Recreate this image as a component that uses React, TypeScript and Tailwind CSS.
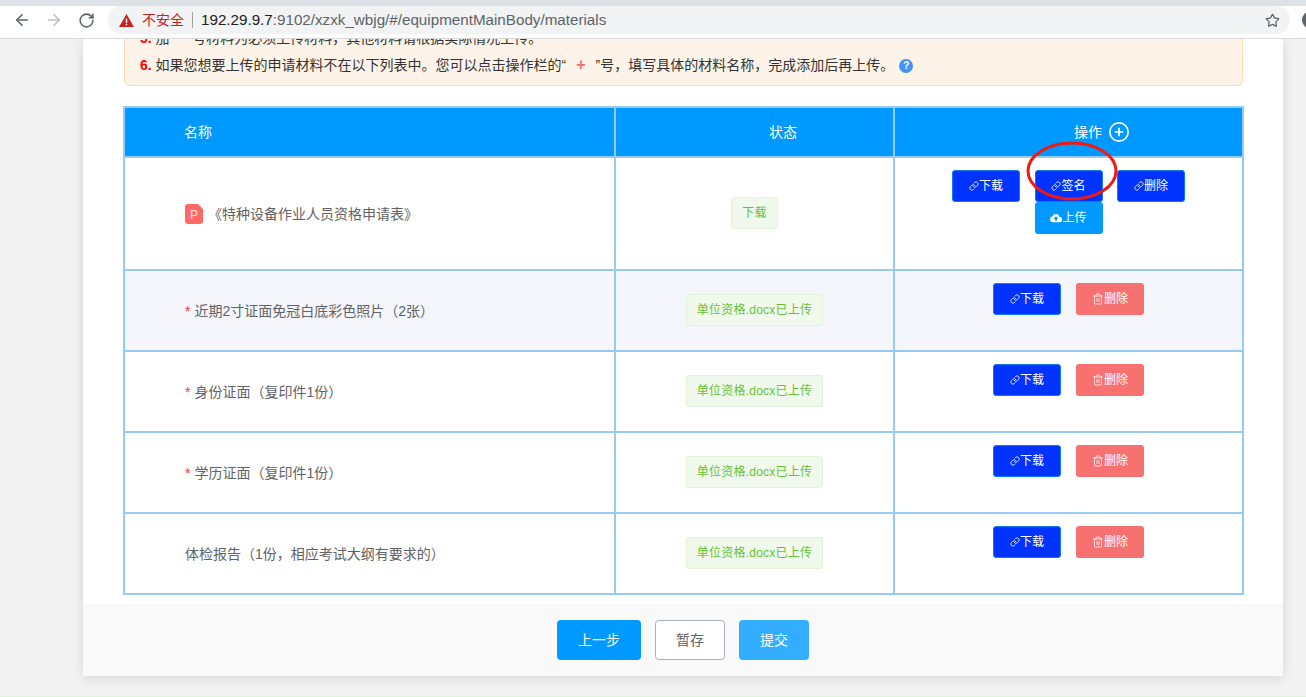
import { ArrowLeft, ArrowRight, CirclePlus, Link, RotateCw, Star, Trash2 } from "lucide-react";

const FONT = "font-['Liberation_Sans','Noto_Sans_CJK_SC',sans-serif]";

const ROWS = [
  { required: true, name: "近期2寸证面免冠白底彩色照片（2张）", bg: "bg-[#f4f6fb]" },
  { required: true, name: "身份证面（复印件1份）", bg: "bg-white" },
  { required: true, name: "学历证面（复印件1份）", bg: "bg-white" },
  { required: false, name: "体检报告（1份，相应考试大纲有要求的）", bg: "bg-white" },
];

function CloudIcon() {
  return (
    <svg viewBox="0 0 24 24" className="w-3 h-3" fill="currentColor">
      <path d="M19.4 10.1A7.5 7.5 0 0 0 5 8.6 6 6 0 0 0 6 20.5h13a5 5 0 0 0 .4-10.4zM14 13.5V17h-4v-3.5H7l5-5 5 5h-3z" />
    </svg>
  );
}

function BlueButton({ label }: { label: string }) {
  return (
    <button className="w-[68px] h-8 rounded-[3px] bg-[#0033ff] border border-[#0a7bf0] text-white text-xs flex items-center justify-center">
      <Link className="w-[10px] h-[10px]" strokeWidth={2} />
      {label}
    </button>
  );
}

function DeleteButton() {
  return (
    <button className="w-[68px] h-8 rounded-[3px] bg-[#f77171] text-white text-xs flex items-center justify-center">
      <Trash2 className="w-3 h-3" strokeWidth={1.5} />
      删除
    </button>
  );
}

function Tag({ label }: { label: string }) {
  return (
    <div className="flex justify-center pb-[1px]">
      <span className="inline-flex items-center h-8 px-[10px] rounded-[3px] bg-[#f0f9eb] border border-[#e1f3d8] text-[#67c23a] text-xs tracking-[0.25px]">
        {label}
      </span>
    </div>
  );
}

function PptIcon() {
  return (
    <svg viewBox="0 0 18 20" className="w-[18px] h-5 shrink-0">
      <path d="M3 0h10l5 5v12a3 3 0 0 1-3 3H3a3 3 0 0 1-3-3V3a3 3 0 0 1 3-3z" fill="#ff6a66" />
      <text x="5" y="15" fontSize="12" fill="#ffe3e2" fontFamily="Liberation Sans, sans-serif">
        P
      </text>
    </svg>
  );
}

function Toolbar() {
  return (
    <div className="h-[39px] shrink-0 bg-white border-b border-[#d9d9d9] flex flex-col">
      <div className="h-[6px] bg-[#dee1e6] shrink-0" />
      <div className="flex-1 flex items-center overflow-hidden pb-[4px]">
        <ArrowLeft className="w-[18px] h-[18px] ml-[13px] text-[#5f6368] shrink-0" strokeWidth={2.2} />
        <ArrowRight className="w-[18px] h-[18px] ml-[14px] text-[#bdc1c6] shrink-0" strokeWidth={2.2} />
        <RotateCw className="w-[17px] h-[17px] ml-[15px] text-[#5f6368] shrink-0" strokeWidth={2.2} />
        <div className="ml-[13px] w-[1182px] h-7 rounded-full bg-[#f1f3f4] flex items-center pl-[11px] shrink-0">
          <svg viewBox="0 0 16 14" className="w-[15px] h-[13px] shrink-0">
            <path d="M8 0l8 14H0z" fill="#c5221f" />
            <rect x="7.2" y="5" width="1.6" height="4.5" fill="#fff" />
            <rect x="7.2" y="10.5" width="1.6" height="1.6" fill="#fff" />
          </svg>
          <span className="ml-2 text-sm text-[#c5221f]">不安全</span>
          <span className="ml-2 w-px h-4 bg-[#9aa0a6]" />
          <span className="ml-2 text-[15.2px] text-[#202124]">
            192.29.9.7<span className="text-[#5f6368]">:9102/xzxk_wbjg/#/equipmentMainBody/materials</span>
          </span>
          <Star className="w-[15px] h-[15px] ml-auto mr-[10px] text-[#5f6368]" strokeWidth={2} />
        </div>
        <div className="ml-[12px] w-[18px] h-[18px] rounded-full bg-[#5f6368] shrink-0" />
      </div>
    </div>
  );
}

function Notice() {
  return (
    <div className="mt-[-14px] w-[1119px] pl-[15px] pb-[6px] rounded-b-md bg-[#fdf3e8] border border-t-0 border-[#f9dcb8] text-sm leading-[27px] text-[#333]">
      <p>
        <b className="text-[#f00]">5.</b> 加“ * ”号材料为必须上传材料，其他材料请根据实际情况上传。
      </p>
      <p className="flex items-center">
        <span>
          <b className="text-[#f00]">6.</b> 如果您想要上传的申请材料不在以下列表中。您可以点击操作栏的“
          <b className="text-[#f56c6c] text-base mx-[10px]">+</b>
          ”号，填写具体的材料名称，完成添加后再上传。
        </span>
        <span className="ml-[5px] w-[14px] h-[14px] rounded-full bg-[#3f95f5] text-white text-[10px] leading-none font-bold flex items-center justify-center">
          ?
        </span>
      </p>
    </div>
  );
}

function MaterialsTable() {
  const cell = "border-2 border-[#97cbf6] p-0";
  return (
    <table className="mt-[20px] ml-[-1px] w-[1119px] table-fixed border-collapse text-sm text-[#606266]">
      <colgroup>
        <col className="w-[491px]" />
        <col className="w-[279px]" />
        <col className="w-[349px]" />
      </colgroup>
      <thead>
        <tr className="h-[50px] bg-[#0099ff] text-white text-sm font-normal">
          <th className={`${cell} pl-[59px] text-left font-normal`}>名称</th>
          <th className={`${cell} pl-[57px] text-center font-normal`}>状态</th>
          <th className={`${cell} pl-[67px] font-normal`}>
            <span className="inline-flex items-center gap-[6px]">
              操作
              <CirclePlus className="w-[22px] h-[22px]" strokeWidth={1.8} />
            </span>
          </th>
        </tr>
      </thead>
      <tbody>
        <tr className="h-[113px] bg-white">
          <td className={`${cell} pl-[60px]`}>
            <div className="flex items-center gap-[5px]">
              <PptIcon />
              《特种设备作业人员资格申请表》
            </div>
          </td>
          <td className={cell}>
            <Tag label="下载" />
          </td>
          <td className={`${cell} align-top pt-[12px]`}>
            <div className="mx-auto w-[240px] flex flex-wrap justify-center gap-x-[14.5px]">
              <BlueButton label="下载" />
              <BlueButton label="签名" />
              <BlueButton label="删除" />
              <button className="w-[68px] h-8 rounded-[3px] bg-[#0099ff] text-white text-xs flex items-center justify-center">
                <CloudIcon />
                上传
              </button>
            </div>
          </td>
        </tr>
        {ROWS.map((row) => (
          <tr key={row.name} className={`h-[81px] ${row.bg}`}>
            <td className={`${cell} pl-[60px]`}>
              {row.required && <span className="text-[#f33] mr-1">*</span>}
              {row.name}
            </td>
            <td className={cell}>
              <Tag label="单位资格.docx已上传" />
            </td>
            <td className={`${cell} align-top pt-[12px]`}>
              <div className="flex justify-center gap-x-[15px]">
                <BlueButton label="下载" />
                <DeleteButton />
              </div>
            </td>
          </tr>
        ))}
      </tbody>
    </table>
  );
}

function Footer() {
  return (
    <div className="h-[72px] bg-[#f9f9f9] flex items-center pl-[474px] gap-[14px] text-sm">
      <button className="w-[84px] h-10 rounded bg-[#0099ff] text-white">上一步</button>
      <button className="w-[70px] h-10 rounded bg-white border border-[#a9b0c0] text-[#606266]">暂存</button>
      <button className="w-[70px] h-10 rounded bg-[#33adff] text-white">提交</button>
    </div>
  );
}

export default function App() {
  return (
    <div className={`${FONT} relative h-[697px] w-[1306px] overflow-hidden bg-[#f2f2f2] flex flex-col`}>
      <Toolbar />
      <main className="flex-1 overflow-hidden">
        <div className="ml-[83px] w-[1200px] h-[637px] bg-white shadow-[0_2px_12px_rgba(0,0,0,0.12)]">
          <div className="h-[565px] overflow-hidden pl-[41px]">
            <Notice />
            <MaterialsTable />
          </div>
          <Footer />
        </div>
      </main>
      <div className="h-px shrink-0 bg-[#e1f3d8]" />
      {/* hand-drawn annotation over the 签名 button */}
      <svg className="absolute left-[1020px] top-[135px] w-[104px] h-[72px] pointer-events-none" viewBox="0 0 104 72" fill="none">
        <ellipse cx="52" cy="36" rx="44" ry="28" stroke="#f01a10" strokeWidth="3" />
      </svg>
    </div>
  );
}
